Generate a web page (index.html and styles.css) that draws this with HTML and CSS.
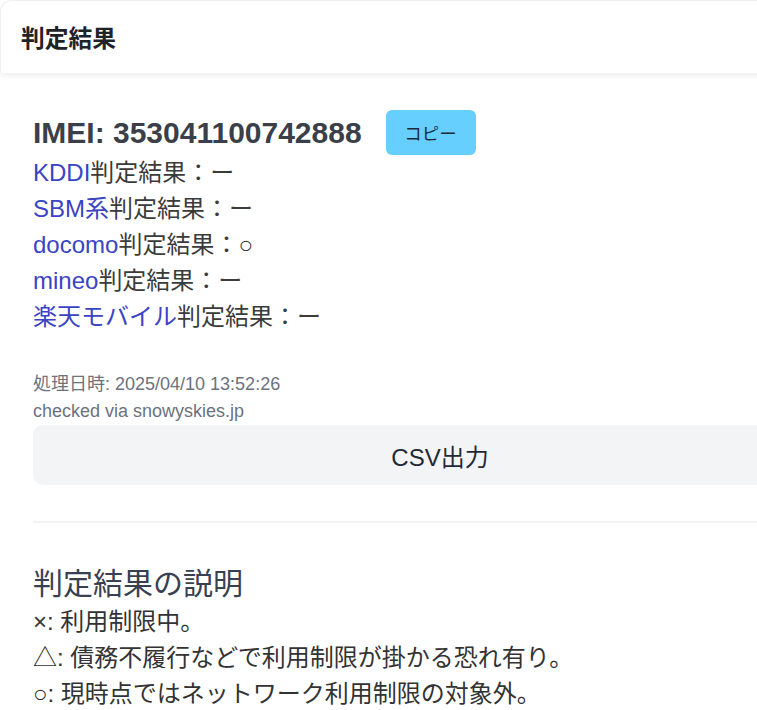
FILE: index.html
```html
<!DOCTYPE html>
<html lang="ja">
<head>
<meta charset="utf-8">
<title>判定結果</title>
<link rel="stylesheet" href="styles.css">
</head>
<body>
<div class="page">
  <div class="card">
    <div class="card-header">判定結果</div>
    <div class="card-body">
      <div class="imei-row">
        <span class="imei">IMEI: 353041100742888</span>
        <button class="copy-btn">コピー</button>
      </div>
      <div class="results">
        <div class="result"><a class="carrier">KDDI</a>判定結果：ー</div>
        <div class="result"><a class="carrier">SBM系</a>判定結果：ー</div>
        <div class="result"><a class="carrier">docomo</a>判定結果：○</div>
        <div class="result"><a class="carrier">mineo</a>判定結果：ー</div>
        <div class="result"><a class="carrier">楽天モバイル</a>判定結果：ー</div>
      </div>
      <div class="meta">
        <div class="meta-line">処理日時: 2025/04/10 13:52:26</div>
        <div class="meta-line">checked via snowyskies.jp</div>
      </div>
      <button class="csv-btn">CSV出力</button>
      <hr class="divider">
      <h2 class="explain-title">判定結果の説明</h2>
      <div class="explain">
        <div class="explain-line">×: 利用制限中。</div>
        <div class="explain-line">△: 債務不履行などで利用制限が掛かる恐れ有り。</div>
        <div class="explain-line">○: 現時点ではネットワーク利用制限の対象外。</div>
      </div>
    </div>
  </div>
</div>
</body>
</html>
```
FILE: styles.css
```css
html, body {
  margin: 0;
  padding: 0;
  background: #ffffff;
  overflow: hidden;
}
body {
  font-family: "Liberation Sans", "Noto Sans CJK JP", sans-serif;
  color: #374151;
}
.page {
  width: 757px;
  height: 710px;
  overflow: hidden;
}
.card {
  width: 880px;
}
.card-header {
  height: 73px;
  box-sizing: border-box;
  display: flex;
  align-items: center;
  padding: 0 20px 2px 20px;
  font-size: 23.75px;
  font-weight: bold;
  color: #1f2328;
  background: #ffffff;
  border: 1px solid #f0f0f0;
  border-bottom: none;
  border-radius: 12px 12px 0 0;
  box-shadow: 0 3px 6px rgba(0, 0, 0, 0.07);
  position: relative;
}
.card-body {
  padding: 37px 0 0 33px;
}
.imei-row {
  display: flex;
  align-items: center;
  gap: 24px;
  height: 45px;
}
.imei {
  font-size: 30px;
  font-weight: bold;
  color: #3a3f4a;
}
.copy-btn {
  width: 90px;
  height: 45px;
  border: none;
  border-radius: 6px;
  background: #67cffd;
  color: #1e2a3a;
  font-family: "Liberation Sans", "Noto Sans CJK JP", sans-serif;
  font-size: 17.5px;
  padding: 0;
}
.results {
  font-size: 24px;
  line-height: 36px;
  color: #3b3b3b;
}
.carrier {
  color: #3a44c4;
  text-decoration: none;
}
.meta {
  margin-top: 36px;
  font-size: 18px;
  line-height: 27px;
  color: #6b7280;
}
.csv-btn {
  display: block;
  width: 814px;
  height: 60px;
  border: none;
  border-radius: 10px;
  background: #f3f4f6;
  color: #1f2937;
  font-family: "Liberation Sans", "Noto Sans CJK JP", sans-serif;
  font-size: 24px;
  padding: 0;
}
.divider {
  width: 814px;
  margin: 36px 0 0 0;
  border: none;
  height: 2px;
  background: #f1f2f4;
}
.explain-title {
  margin: 41px 0 0 0;
  font-size: 30px;
  line-height: 40px;
  font-weight: normal;
  color: #374151;
}
.explain {
  font-size: 24px;
  line-height: 36px;
  color: #333333;
}
```
